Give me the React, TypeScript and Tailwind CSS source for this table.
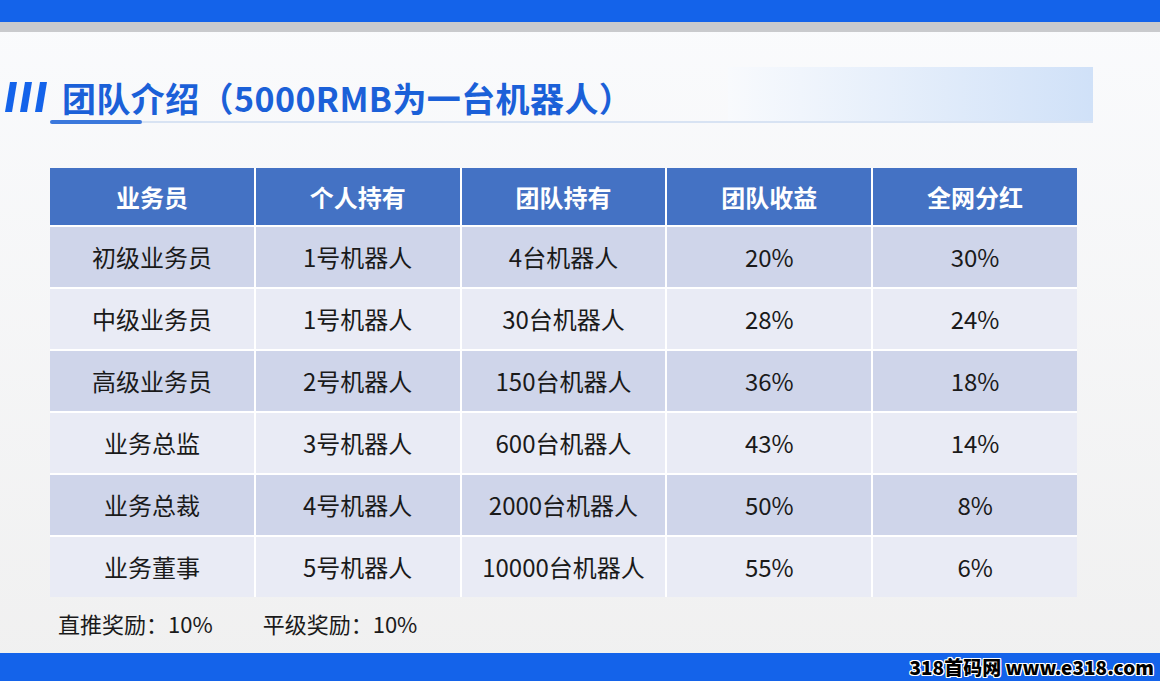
import React from "react";

const header = ["业务员", "个人持有", "团队持有", "团队收益", "全网分红"];
const rows = [
  ["初级业务员", "1号机器人", "4台机器人", "20%", "30%"],
  ["中级业务员", "1号机器人", "30台机器人", "28%", "24%"],
  ["高级业务员", "2号机器人", "150台机器人", "36%", "18%"],
  ["业务总监", "3号机器人", "600台机器人", "43%", "14%"],
  ["业务总裁", "4号机器人", "2000台机器人", "50%", "8%"],
  ["业务董事", "5号机器人", "10000台机器人", "55%", "6%"],
];

export default function App() {
  return (
    <div
      className="w-[1160px] h-[681px] overflow-hidden flex flex-col bg-gradient-to-b from-[#fafbfd] to-[#f0f0f0]"
      style={{ fontFamily: '"Noto Sans CJK SC", "Noto Sans", sans-serif' }}
    >
      <div className="h-[22px] bg-[#1463ea] shrink-0" />
      <div className="h-[10px] bg-[#c9cacd] shrink-0" />
      <div className="flex-1 flex flex-col relative">
        {/* gradient decoration */}
        <div className="absolute left-[728px] top-[35px] w-[365px] h-[56px] bg-gradient-to-r from-[#f8fafd] to-[#d0e1f8]" />
        {/* title */}
        <div className="relative flex items-end pl-[5px] mt-[44px] h-[44px]">
          <svg width="44" height="32" viewBox="0 0 44 32" className="mb-[6px]">
            <polygon points="5,0 12,0 7,30 0,30" fill="#1463ea" />
            <polygon points="20,0 27,0 22,30 15,30" fill="#1463ea" />
            <polygon points="35,0 42,0 37,30 30,30" fill="#1463ea" />
          </svg>
          <div className="ml-[13px] text-[34px] leading-[44px] font-bold text-[#1b60d8] tracking-[0.4px]">
            团队介绍（5000RMB为一台机器人）
          </div>
        </div>
        <div className="relative flex items-center ml-[50px] mt-[0px] w-[1043px] h-[4px]">
          <div className="w-[92px] h-[4px] rounded-full bg-[#3b78dc]" />
          <div className="flex-1 h-[2px] bg-[#d8e3f3]" />
        </div>
        {/* table */}
        <div className="relative ml-[50px] mt-[44px] w-[1027px] grid grid-cols-5 gap-[2px] bg-white">
          {header.map((h) => (
            <div
              key={h}
              className="h-[57px] bg-[#4472c4] text-white font-bold text-[24px] flex items-center justify-center"
            >
              {h}
            </div>
          ))}
          {rows.map((r, i) =>
            r.map((c, j) => (
              <div
                key={i + "-" + j}
                className={
                  "h-[60px] flex items-center justify-center text-[24px] text-[#1a1a1a] " +
                  (i % 2 === 0 ? "bg-[#cfd5ea]" : "bg-[#e9ebf5]")
                }
              >
                {c}
              </div>
            ))
          )}
        </div>
        <div className="relative flex mt-[10px] ml-[58px] text-[22px] leading-[32px] text-[#1a1a1a]">
          <span>直推奖励：10%</span>
          <span className="ml-[50px]">平级奖励：10%</span>
        </div>
      </div>
      <div className="h-[28px] bg-[#1463ea] shrink-0 flex items-center justify-end pr-[6px]">
        <span
          className="text-[19px] font-black text-black tracking-[0px] [text-shadow:1px_1px_0_#fff,-1px_-1px_0_#fff,1px_-1px_0_#fff,-1px_1px_0_#fff,0_1px_0_#fff,0_-1px_0_#fff,1px_0_0_#fff,-1px_0_0_#fff]"
          style={{ fontFamily: '"Noto Sans CJK SC", "DejaVu Sans", sans-serif' }}
        >
          318首码网 www.e318.com
        </span>
      </div>
    </div>
  );
}
